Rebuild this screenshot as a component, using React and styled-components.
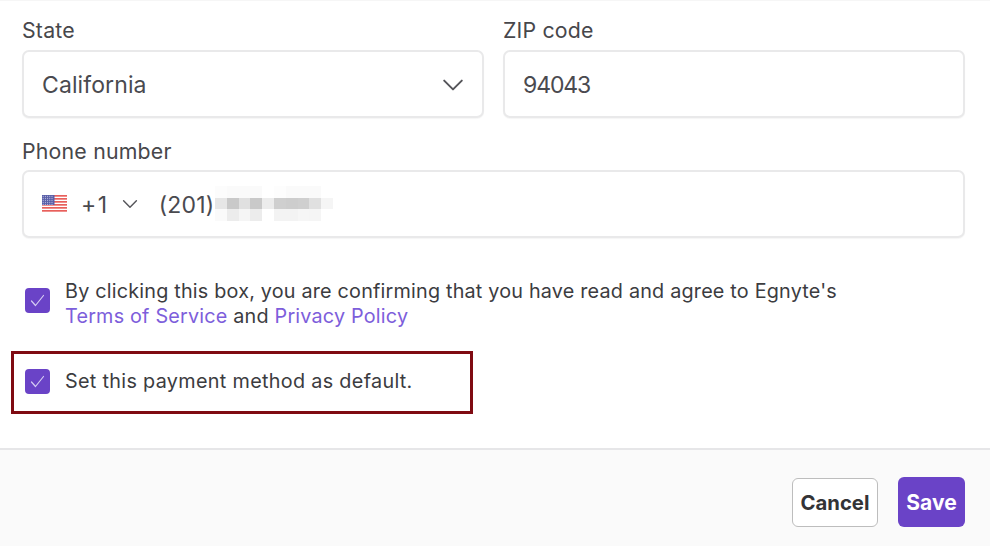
import React from 'react'
import styled, { createGlobalStyle } from 'styled-components'

const GlobalStyle = createGlobalStyle`
html, body {
  margin: 0;
  padding: 0;
  background: #fff;
  overflow: hidden;
}
body {
  font-family: Inter, "Liberation Sans", sans-serif;
  color: #3d3d40;
}
`
const Panel = styled.div`
  width: 990px;
  height: 546px;
  display: flex;
  flex-direction: column;
  border-top: 1px solid #f6f6f6;
  box-sizing: border-box;
`
const Body = styled.div`
  flex: 1;
  padding: 14px 25px 0 22px;
  display: flex;
  flex-direction: column;
`
const Row = styled.div`
  display: grid;
  grid-template-columns: 462px 462px;
  column-gap: 19px;
`
const Field = styled.div`
  display: flex;
  flex-direction: column;
  margin-top: ${p => p.$top || 0}px;
`
const Label = styled.label`
  font-size: 21.3px;
  letter-spacing: 0.2px;
  line-height: 30px;
  height: ${p => p.$height || 35}px;
  color: #47474b;
`
const Input = styled.div`
  height: 68px;
  box-sizing: border-box;
  border: 2px solid #e9e9ea;
  border-radius: 7px;
  background: #fff;
  box-shadow: 0 1px 1px rgba(0, 0, 0, 0.04);
  display: flex;
  align-items: center;
  padding: 2px 18px 0;
  font-size: 23px;
  letter-spacing: 0.1px;
  color: #4a4a4f;
  justify-content: ${p => (p.$between ? 'space-between' : 'flex-start')};
`
const Zip = styled.span`
  letter-spacing: -1.1px;
`
const Flag = styled.svg`
  width: 25px;
  height: 18px;
  margin: 0 14px 2px 0;
`
const Code = styled.span`
  letter-spacing: 1.6px;
  margin-right: 13px;
`
const PhoneChevron = styled.span`
  display: flex;
  margin: 0 21px 2px 0;
`
const PhoneNumber = styled.span`
  letter-spacing: 0.2px;
`
const Mosaic = styled.svg`
  width: 118px;
  height: 35px;
  margin: 0 0 4px 1px;
`
const Consent = styled.div`
  display: flex;
  align-items: ${p => (p.$center ? 'center' : 'flex-start')};
  margin: ${p => p.$top}px 0 0 3px;
`
const Box = styled.span`
  flex: none;
  width: 25px;
  height: 25px;
  border-radius: 4px;
  background: #6a43c7;
  display: flex;
  align-items: center;
  justify-content: center;
  margin: ${p => p.$top || 0}px 15px 0 0;
`
const ConsentText = styled.p`
  margin: 0;
  padding-top: ${p => (p.$wide ? 1 : 0)}px;
  font-size: 19.8px;
  letter-spacing: ${p => (p.$wide ? 0.32 : 0.2)}px;
  line-height: 25px;
  color: #3c3c3f;
`
const TextLink = styled.a`
  color: #7d5edb;
  text-decoration: none;
`
const Callout = styled.div`
  position: absolute;
  left: 11px;
  top: 351px;
  width: 462px;
  height: 63px;
  box-sizing: border-box;
  border: 3px solid #7f0a12;
`
const Footer = styled.div`
  height: 98px;
  box-sizing: border-box;
  border-top: 2px solid #e6e6e8;
  background: #fafafa;
  display: flex;
  justify-content: flex-end;
  align-items: flex-start;
  gap: 20px;
  padding: 27px 25px 0 0;
`
const Button = styled.button`
  height: ${p => (p.$primary ? 50 : 49)}px;
  margin-top: ${p => (p.$primary ? 0 : 1)}px;
  box-sizing: border-box;
  border-radius: 6px;
  font-family: Inter, "Liberation Sans", sans-serif;
  font-size: ${p => (p.$primary ? 21 : 20.3)}px;
  font-weight: 700;
  padding: 0;
  width: ${p => p.$width}px;
  color: ${p => (p.$primary ? '#fff' : '#333336')};
  background: ${p => (p.$primary ? '#6a43c7' : '#fff')};
  border: ${p => (p.$primary ? 'none' : '1.5px solid #bdbdbd')};
`

const Chevron = ({ size }) => (
  <svg width={size} height={size} viewBox="0 0 20 20" fill="none" stroke="#55555a" strokeWidth="1.8" strokeLinecap="round" strokeLinejoin="round">
    <path d="M2 6l8 8 8-8" />
  </svg>
)

const Check = () => (
  <svg width="17" height="17" viewBox="0 0 17 17" fill="none" stroke="#d6cdf2" strokeWidth="1.2" strokeLinecap="round" strokeLinejoin="round">
    <path d="M2.5 9l4 4.5 8-10" />
  </svg>
)

const stars = []
for (let y = 1.2; y < 10; y += 2) {
  for (let x = 1.2; x < 12; x += 2.2) stars.push([x, y])
}

const UsFlag = () => (
  <Flag viewBox="0 0 25 18">
    <rect width="25" height="18" fill="#fff" />
    {[0, 3, 6, 9, 12, 15].map(y => (
      <rect key={y} y={y} width="25" height="1.7" fill="#e8605c" />
    ))}
    <rect width="12.5" height="10" fill="#5a5fa8" />
    {stars.map(([x, y]) => (
      <circle key={`${x}-${y}`} cx={x} cy={y} r="0.55" fill="#d6d8ee" />
    ))}
  </Flag>
)

const blurRows = [
  ['#fcfcfc', '#fafafa', '#fafafa', '#fafafa', '#fff', '#fdfdfd', '#fafafa', '#fafafa', '#fafafa', '#fff'],
  ['#e6e6e6', '#c9c9c9', '#e0e0e0', '#c9c9c9', '#ececec', '#cfcfcf', '#cdcdcd', '#cfcfcf', '#e0e0e0', '#f5f5f5'],
  ['#fafafa', '#ececec', '#f5f5f5', '#ececec', '#fff', '#f3f3f3', '#f3f3f3', '#f6f6f6', '#f5f5f5', '#fff'],
]

const BlurredDigits = () => (
  <Mosaic viewBox="0 0 118 35" shapeRendering="crispEdges">
    {blurRows.map((row, y) =>
      row.map((fill, x) => (
        <rect key={`${x}-${y}`} x={x * 11.8} y={y * 11.67} width="11.8" height="11.67" fill={fill} />
      ))
    )}
  </Mosaic>
)

export default function App() {
  return (
    <>
      <GlobalStyle />
      <Panel>
        <Body>
          <Row>
            <Field>
              <Label>State</Label>
              <Input $between>
                California
                <Chevron size={22} />
              </Input>
            </Field>
            <Field>
              <Label>ZIP code</Label>
              <Input><Zip>94043</Zip></Input>
            </Field>
          </Row>
          <Field $top={18}>
            <Label $height={34}>Phone number</Label>
            <Input>
              <UsFlag />
              <Code>+1</Code>
              <PhoneChevron><Chevron size={16} /></PhoneChevron>
              <PhoneNumber>(201)</PhoneNumber>
              <BlurredDigits />
            </Input>
          </Field>
          <Consent $top={41}>
            <Box $top={9}><Check /></Box>
            <ConsentText>
              By clicking this box, you are confirming that you have read and agree to Egnyte's
              <br />
              <TextLink>Terms of Service</TextLink> and <TextLink>Privacy Policy</TextLink>
            </ConsentText>
          </Consent>
          <Consent $top={39} $center>
            <Box><Check /></Box>
            <ConsentText $wide>Set this payment method as default.</ConsentText>
          </Consent>
        </Body>
        <Footer>
          <Button $width={86}>Cancel</Button>
          <Button $primary $width={67}>Save</Button>
        </Footer>
      </Panel>
      <Callout />
    </>
  )
}
